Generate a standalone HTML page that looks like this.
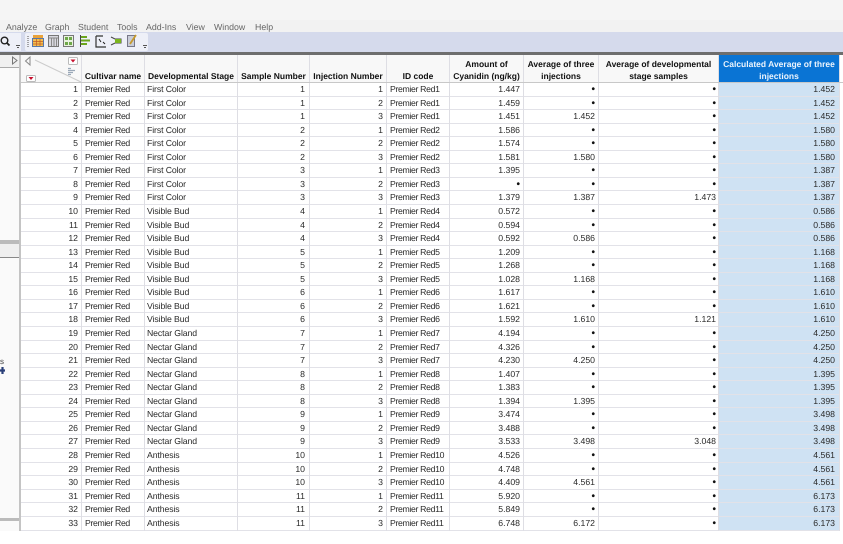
<!DOCTYPE html>
<html><head><meta charset="utf-8"><style>
html,body{margin:0;padding:0}
body{width:843px;height:531px;overflow:hidden;position:relative;background:#fff;font:8.7px/13px "Liberation Sans",sans-serif;color:#2a2a2a;text-rendering:geometricPrecision}
div,span{position:absolute;white-space:nowrap}
.m{top:21px;font-size:8.8px;color:#666}
.r{left:21px;width:818px;height:13px}
.r::before{content:"";position:absolute;left:0;top:-1px;width:818px;height:1px;background:#e2e2e8}
.r span{top:0;height:13px}
.r span:nth-child(1){left:0;width:57px;text-align:right}
.r span:nth-child(2){left:64px;letter-spacing:-.35px}
.r span:nth-child(3){left:126px;letter-spacing:-.1px}
.r span:nth-child(4){left:216px;width:68px;text-align:right}
.r span:nth-child(5){left:288px;width:74px;text-align:right}
.r span:nth-child(6){left:369px;letter-spacing:-.33px}
.r span:nth-child(7){left:429px;width:70px;text-align:right}
.r span:nth-child(8){left:503px;width:71px;text-align:right}
.r span:nth-child(9){left:578px;width:117px;text-align:right}
.r span:nth-child(10){left:698px;width:116px;text-align:right}
.r span.d{font-size:10px;font-weight:bold;color:#111}
.v{top:55px;width:1px;height:476px;background:#dedee4}
.h{top:55px;height:27px;background:#f8f8f8;font-weight:bold;font-size:8.5px;text-align:center;display:flex;align-items:flex-end;justify-content:center;line-height:12px;white-space:normal;color:#111;box-sizing:border-box}
</style></head><body>
<div style="left:0;top:0;width:843px;height:20px;background:#f5f5f5"></div>
<div style="left:0;top:20px;width:843px;height:12px;background:#f2f2f2"></div>
<div class="m" style="left:6px">Analyze</div><div class="m" style="left:45px">Graph</div><div class="m" style="left:78px">Student</div><div class="m" style="left:117px">Tools</div><div class="m" style="left:146px">Add-Ins</div><div class="m" style="left:186px">View</div><div class="m" style="left:214px">Window</div><div class="m" style="left:255px">Help</div>
<div style="left:0;top:32px;width:843px;height:20px;background:#d5daec"></div>
<div style="left:0;top:33px;width:21px;height:18px;background:#eef0f8"></div>
<div style="left:25px;top:33px;width:123px;height:18px;background:#eef0f8;border-radius:2px"></div>
<svg style="position:absolute;left:0;top:32px" width="160" height="20">
<circle cx="4.500" cy="8.500" r="3.300" fill="none" stroke="#222" stroke-width="1.400"/><path d="M7 11l2.500 2.500" stroke="#222" stroke-width="1.800"/>
<path d="M16 13.500h4M17 15.500h2" stroke="#555" stroke-width="1"/>
<path d="M28 4v12" stroke="#555" stroke-width="1" stroke-dasharray="1 1"/>
<rect x="33" y="3" width="10" height="3" fill="#e9a23b"/><rect x="32.500" y="6.500" width="11" height="8" fill="#f4c04e" stroke="#5878a8"/><path d="M33 9.500h10M33 12h10M36.500 7v7M40 7v7" stroke="#c05a28" stroke-width=".7"/>
<rect x="48.500" y="3.500" width="10" height="11" fill="#d8d8e0" stroke="#777"/><path d="M49 6h9M51.500 6v8M54 6v8M56.500 6v8" stroke="#888"/>
<rect x="63.500" y="3.500" width="10" height="11" fill="#e8f2e0" stroke="#777"/><path d="M65 5h3v3h-3zM69 5h3v3h-3zM65 10h3v3h-3zM69 10h3v3h-3z" fill="#6ea84a"/>
<path d="M80.500 3v12" stroke="#444"/><path d="M81 5h6M81 8.500h9M81 12h6" stroke="#6aa51e" stroke-width="2"/>
<path d="M96 4h7M96 4v11h10" fill="none" stroke="#333" stroke-width="1.200"/><path d="M99 7l2 3M103 10l2 2" stroke="#222"/>
<path d="M111 5l4 2h6v4h-6l-4 2" fill="none" stroke="#444"/><path d="M115 7h6v4h-6z" fill="#7ab51d"/>
<rect x="127.500" y="3.500" width="7" height="11" fill="#c8ccd8" stroke="#778"/><path d="M130 12l6-9" stroke="#c79a2d" stroke-width="1.800"/>
<path d="M143 13.500h4M144 15.500h2" stroke="#555" stroke-width="1"/>
</svg>
<div style="left:0;top:52px;width:843px;height:3px;background:#6e6e6e"></div>
<div style="left:0;top:55px;width:21px;height:476px;background:#fafafa"></div>
<div style="left:19px;top:55px;width:2px;height:476px;background:#c4c4c4"></div>
<div style="left:0;top:55px;width:19px;height:12px;background:#f0f0f0;border-bottom:1px solid #aaa"></div>
<div style="left:0;top:240px;width:19px;height:4px;background:#bbb"></div>
<div style="left:0;top:244px;width:19px;height:13px;background:#efefef;border-bottom:1px solid #888"></div>
<div style="left:0;top:355px;font-size:8px;color:#444">s</div>
<svg style="position:absolute;left:0;top:366px" width="6" height="9"><path d="M2.500 1v7M0 4.500h5" stroke="#2a3f78" stroke-width="2.200"/></svg>
<div style="left:0;top:518px;width:19px;height:3px;background:#bbb"></div>

<div style="left:719px;top:83px;width:120px;height:448px;background:#cfe2f3"></div>
<div class="h" style="left:21px;width:60px"></div>
<div class="h" style="left:82px;width:62px">Cultivar name</div>
<div class="h" style="left:145px;width:92px">Developmental Stage</div>
<div class="h" style="left:238px;width:71px">Sample Number</div>
<div class="h" style="left:310px;width:76px">Injection Number</div>
<div class="h" style="left:387px;width:62px">ID code</div>
<div class="h" style="left:450px;width:73px">Amount of<br>Cyanidin (ng/kg)</div>
<div class="h" style="left:524px;width:74px">Average of three<br>injections</div>
<div class="h" style="left:599px;width:119px">Average of developmental<br>stage samples</div>
<div class="h" style="left:719px;width:120px;background:#0a74d4;color:#eaf3fc">Calculated Average of three<br>injections</div>
<svg style="position:absolute;left:0;top:55px" width="82" height="28">
<path d="M12.500 2v7l4.500-3.500z" fill="none" stroke="#777"/>
<path d="M30 2v8l-4.500-4z" fill="none" stroke="#888"/>
<path d="M35 5l46 22" stroke="#ccc" stroke-width="1"/>
<rect x="68.500" y="2.500" width="9" height="7" rx="1" fill="#fff" stroke="#bbb"/><path d="M70.500 4.500h5l-2.500 3z" fill="#c8102e"/>
<rect x="26.500" y="20.500" width="9" height="6" rx="1" fill="#fff" stroke="#bbb"/><path d="M28.500 22h5l-2.500 3z" fill="#c8102e"/>
<path d="M68 13.500h3M68 15.500h7M68 17.500h5M68 19.500h3" stroke="#9aa8b8" stroke-width="1.200"/>
</svg>

<div class="r" style="top:83px"><span>1</span><span>Premier Red</span><span>First Color</span><span>1</span><span>1</span><span>Premier Red1</span><span>1.447</span><span class="d">•</span><span class="d">•</span><span>1.452</span></div>
<div class="r" style="top:97px"><span>2</span><span>Premier Red</span><span>First Color</span><span>1</span><span>2</span><span>Premier Red1</span><span>1.459</span><span class="d">•</span><span class="d">•</span><span>1.452</span></div>
<div class="r" style="top:110px"><span>3</span><span>Premier Red</span><span>First Color</span><span>1</span><span>3</span><span>Premier Red1</span><span>1.451</span><span>1.452</span><span class="d">•</span><span>1.452</span></div>
<div class="r" style="top:124px"><span>4</span><span>Premier Red</span><span>First Color</span><span>2</span><span>1</span><span>Premier Red2</span><span>1.586</span><span class="d">•</span><span class="d">•</span><span>1.580</span></div>
<div class="r" style="top:137px"><span>5</span><span>Premier Red</span><span>First Color</span><span>2</span><span>2</span><span>Premier Red2</span><span>1.574</span><span class="d">•</span><span class="d">•</span><span>1.580</span></div>
<div class="r" style="top:151px"><span>6</span><span>Premier Red</span><span>First Color</span><span>2</span><span>3</span><span>Premier Red2</span><span>1.581</span><span>1.580</span><span class="d">•</span><span>1.580</span></div>
<div class="r" style="top:164px"><span>7</span><span>Premier Red</span><span>First Color</span><span>3</span><span>1</span><span>Premier Red3</span><span>1.395</span><span class="d">•</span><span class="d">•</span><span>1.387</span></div>
<div class="r" style="top:178px"><span>8</span><span>Premier Red</span><span>First Color</span><span>3</span><span>2</span><span>Premier Red3</span><span class="d">•</span><span class="d">•</span><span class="d">•</span><span>1.387</span></div>
<div class="r" style="top:191px"><span>9</span><span>Premier Red</span><span>First Color</span><span>3</span><span>3</span><span>Premier Red3</span><span>1.379</span><span>1.387</span><span>1.473</span><span>1.387</span></div>
<div class="r" style="top:205px"><span>10</span><span>Premier Red</span><span>Visible Bud</span><span>4</span><span>1</span><span>Premier Red4</span><span>0.572</span><span class="d">•</span><span class="d">•</span><span>0.586</span></div>
<div class="r" style="top:219px"><span>11</span><span>Premier Red</span><span>Visible Bud</span><span>4</span><span>2</span><span>Premier Red4</span><span>0.594</span><span class="d">•</span><span class="d">•</span><span>0.586</span></div>
<div class="r" style="top:232px"><span>12</span><span>Premier Red</span><span>Visible Bud</span><span>4</span><span>3</span><span>Premier Red4</span><span>0.592</span><span>0.586</span><span class="d">•</span><span>0.586</span></div>
<div class="r" style="top:246px"><span>13</span><span>Premier Red</span><span>Visible Bud</span><span>5</span><span>1</span><span>Premier Red5</span><span>1.209</span><span class="d">•</span><span class="d">•</span><span>1.168</span></div>
<div class="r" style="top:259px"><span>14</span><span>Premier Red</span><span>Visible Bud</span><span>5</span><span>2</span><span>Premier Red5</span><span>1.268</span><span class="d">•</span><span class="d">•</span><span>1.168</span></div>
<div class="r" style="top:273px"><span>15</span><span>Premier Red</span><span>Visible Bud</span><span>5</span><span>3</span><span>Premier Red5</span><span>1.028</span><span>1.168</span><span class="d">•</span><span>1.168</span></div>
<div class="r" style="top:286px"><span>16</span><span>Premier Red</span><span>Visible Bud</span><span>6</span><span>1</span><span>Premier Red6</span><span>1.617</span><span class="d">•</span><span class="d">•</span><span>1.610</span></div>
<div class="r" style="top:300px"><span>17</span><span>Premier Red</span><span>Visible Bud</span><span>6</span><span>2</span><span>Premier Red6</span><span>1.621</span><span class="d">•</span><span class="d">•</span><span>1.610</span></div>
<div class="r" style="top:313px"><span>18</span><span>Premier Red</span><span>Visible Bud</span><span>6</span><span>3</span><span>Premier Red6</span><span>1.592</span><span>1.610</span><span>1.121</span><span>1.610</span></div>
<div class="r" style="top:327px"><span>19</span><span>Premier Red</span><span>Nectar Gland</span><span>7</span><span>1</span><span>Premier Red7</span><span>4.194</span><span class="d">•</span><span class="d">•</span><span>4.250</span></div>
<div class="r" style="top:341px"><span>20</span><span>Premier Red</span><span>Nectar Gland</span><span>7</span><span>2</span><span>Premier Red7</span><span>4.326</span><span class="d">•</span><span class="d">•</span><span>4.250</span></div>
<div class="r" style="top:354px"><span>21</span><span>Premier Red</span><span>Nectar Gland</span><span>7</span><span>3</span><span>Premier Red7</span><span>4.230</span><span>4.250</span><span class="d">•</span><span>4.250</span></div>
<div class="r" style="top:368px"><span>22</span><span>Premier Red</span><span>Nectar Gland</span><span>8</span><span>1</span><span>Premier Red8</span><span>1.407</span><span class="d">•</span><span class="d">•</span><span>1.395</span></div>
<div class="r" style="top:381px"><span>23</span><span>Premier Red</span><span>Nectar Gland</span><span>8</span><span>2</span><span>Premier Red8</span><span>1.383</span><span class="d">•</span><span class="d">•</span><span>1.395</span></div>
<div class="r" style="top:395px"><span>24</span><span>Premier Red</span><span>Nectar Gland</span><span>8</span><span>3</span><span>Premier Red8</span><span>1.394</span><span>1.395</span><span class="d">•</span><span>1.395</span></div>
<div class="r" style="top:408px"><span>25</span><span>Premier Red</span><span>Nectar Gland</span><span>9</span><span>1</span><span>Premier Red9</span><span>3.474</span><span class="d">•</span><span class="d">•</span><span>3.498</span></div>
<div class="r" style="top:422px"><span>26</span><span>Premier Red</span><span>Nectar Gland</span><span>9</span><span>2</span><span>Premier Red9</span><span>3.488</span><span class="d">•</span><span class="d">•</span><span>3.498</span></div>
<div class="r" style="top:435px"><span>27</span><span>Premier Red</span><span>Nectar Gland</span><span>9</span><span>3</span><span>Premier Red9</span><span>3.533</span><span>3.498</span><span>3.048</span><span>3.498</span></div>
<div class="r" style="top:449px"><span>28</span><span>Premier Red</span><span>Anthesis</span><span>10</span><span>1</span><span>Premier Red10</span><span>4.526</span><span class="d">•</span><span class="d">•</span><span>4.561</span></div>
<div class="r" style="top:463px"><span>29</span><span>Premier Red</span><span>Anthesis</span><span>10</span><span>2</span><span>Premier Red10</span><span>4.748</span><span class="d">•</span><span class="d">•</span><span>4.561</span></div>
<div class="r" style="top:476px"><span>30</span><span>Premier Red</span><span>Anthesis</span><span>10</span><span>3</span><span>Premier Red10</span><span>4.409</span><span>4.561</span><span class="d">•</span><span>4.561</span></div>
<div class="r" style="top:490px"><span>31</span><span>Premier Red</span><span>Anthesis</span><span>11</span><span>1</span><span>Premier Red11</span><span>5.920</span><span class="d">•</span><span class="d">•</span><span>6.173</span></div>
<div class="r" style="top:503px"><span>32</span><span>Premier Red</span><span>Anthesis</span><span>11</span><span>2</span><span>Premier Red11</span><span>5.849</span><span class="d">•</span><span class="d">•</span><span>6.173</span></div>
<div class="r" style="top:517px"><span>33</span><span>Premier Red</span><span>Anthesis</span><span>11</span><span>3</span><span>Premier Red11</span><span>6.748</span><span>6.172</span><span class="d">•</span><span>6.173</span></div>
<div class="r" style="top:531px"></div>

<div class="v" style="left:81px"></div><div class="v" style="left:144px"></div><div class="v" style="left:237px"></div><div class="v" style="left:309px"></div><div class="v" style="left:386px"></div><div class="v" style="left:449px"></div><div class="v" style="left:523px"></div><div class="v" style="left:598px"></div><div class="v" style="left:718px"></div><div class="v" style="left:839px"></div>
<div style="left:21px;top:82px;width:822px;height:1px;background:#c8c8c8"></div>
</body></html>
